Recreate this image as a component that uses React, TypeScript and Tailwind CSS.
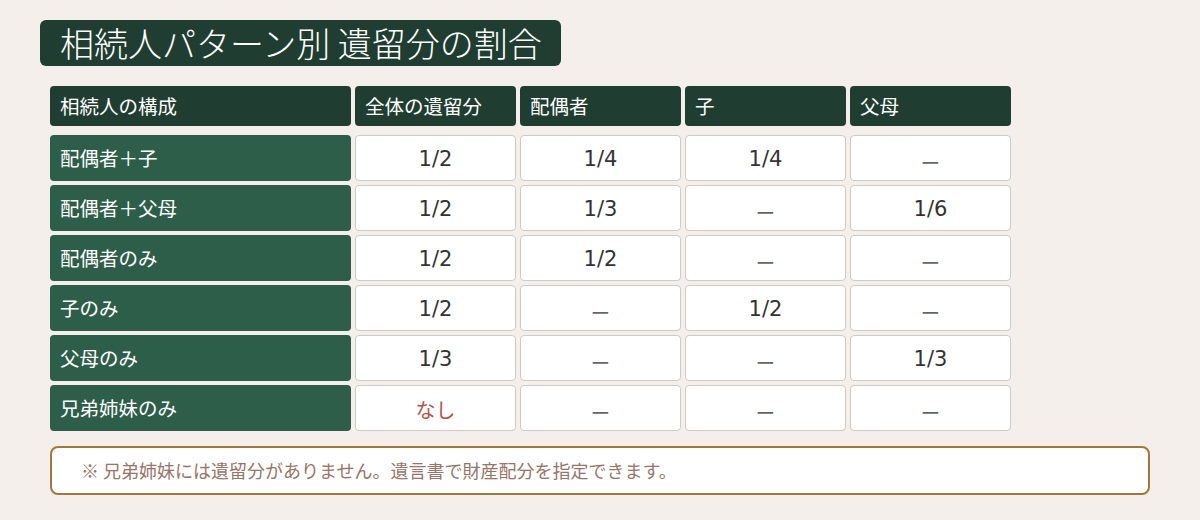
import React from "react";

const headers = ["相続人の構成", "全体の遺留分", "配偶者", "子", "父母"];
const rows: string[][] = [
  ["配偶者＋子", "1/2", "1/4", "1/4", "—"],
  ["配偶者＋父母", "1/2", "1/3", "—", "1/6"],
  ["配偶者のみ", "1/2", "1/2", "—", "—"],
  ["子のみ", "1/2", "—", "1/2", "—"],
  ["父母のみ", "1/3", "—", "—", "1/3"],
  ["兄弟姉妹のみ", "なし", "—", "—", "—"],
];

export default function App() {
  return (
    <div
      className="w-[1200px] h-[520px] bg-[#f4efeb] overflow-hidden pt-[20px]"
      style={{ fontFamily: '"Noto Sans CJK JP", "Noto Sans", sans-serif' }}
    >
      <div className="ml-[40px] inline-flex h-[46px] items-center rounded-[6px] bg-[#1f3d30] pl-[20px] pr-[19px]">
        <span className="text-[34px] font-light leading-none text-white">
          相続人パターン別 遺留分の割合
        </span>
      </div>

      <div className="ml-[50px] mt-[20px] w-[961px]">
        <div className="grid grid-cols-[301px_161px_161px_161px_161px] gap-[4px]">
          {headers.map((h) => (
            <div
              key={h}
              className="flex h-[40px] items-center rounded-[4px] bg-[#1f3d30] pl-[10px] text-[19.5px] text-white"
            >
              {h}
            </div>
          ))}
        </div>
        <div className="mt-[9px] grid grid-cols-[301px_161px_161px_161px_161px] gap-[4px]">
          {rows.map((r) => (
            <React.Fragment key={r[0]}>
              <div className="flex h-[46px] items-center rounded-[4px] bg-[#2d5e4a] pl-[10px] text-[19.5px] text-white">
                {r[0]}
              </div>
              {r.slice(1).map((v, i) => (
                <div
                  key={i}
                  className={
                    "flex h-[46px] items-center justify-center rounded-[4px] border border-[#cfcac6] bg-white pt-[4px] " +
                    (v === "なし"
                      ? "text-[20px] text-[#b5524a]"
                      : v === "—"
                      ? "text-[19px] font-bold text-[#666666]"
                      : "text-[21px] text-[#333333]")
                  }
                  style={
                    v === "1/2" || v === "1/3" || v === "1/4" || v === "1/6"
                      ? { fontFamily: '"DejaVu Sans", "Noto Sans CJK JP", sans-serif' }
                      : undefined
                  }
                >
                  {v}
                </div>
              ))}
            </React.Fragment>
          ))}
        </div>
      </div>

      <div className="ml-[50px] mt-[15px] flex h-[49px] w-[1100px] items-center rounded-[8px] border-2 border-[#a07838] bg-white pl-[29px] text-[18px] text-[#9a7468]">
        ※ 兄弟姉妹には遺留分がありません。遺言書で財産配分を指定できます。
      </div>
    </div>
  );
}
